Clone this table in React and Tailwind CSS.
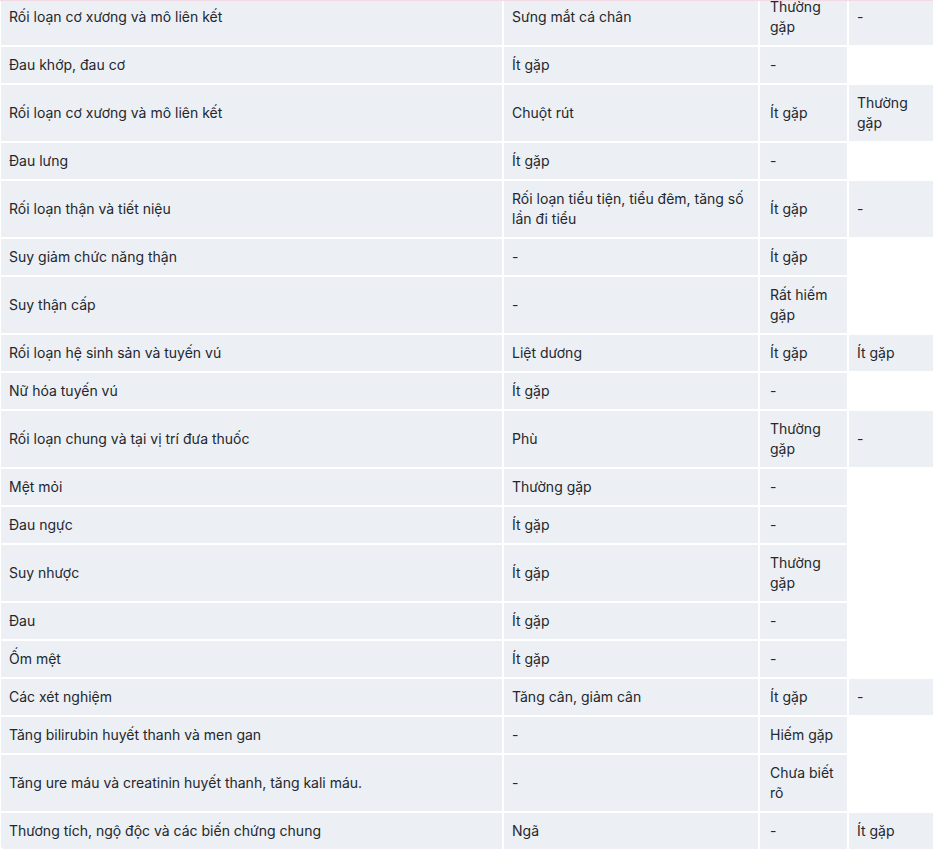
import React from 'react';

const rows = [
    ['Rối loạn cơ xương và mô liên kết', 'Sưng mắt cá chân', 'Thường gặp', '-'],
    ['Đau khớp, đau cơ', 'Ít gặp', '-'],
    ['Rối loạn cơ xương và mô liên kết', 'Chuột rút', 'Ít gặp', 'Thường gặp'],
    ['Đau lưng', 'Ít gặp', '-'],
    ['Rối loạn thận và tiết niệu', 'Rối loạn tiểu tiện, tiểu đêm, tăng số lần đi tiểu', 'Ít gặp', '-'],
    ['Suy giảm chức năng thận', '-', 'Ít gặp'],
    ['Suy thận cấp', '-', 'Rất hiếm gặp'],
    ['Rối loạn hệ sinh sản và tuyến vú', 'Liệt dương', 'Ít gặp', 'Ít gặp'],
    ['Nữ hóa tuyến vú', 'Ít gặp', '-'],
    ['Rối loạn chung và tại vị trí đưa thuốc', 'Phù', 'Thường gặp', '-'],
    ['Mệt mỏi', 'Thường gặp', '-'],
    ['Đau ngực', 'Ít gặp', '-'],
    ['Suy nhược', 'Ít gặp', 'Thường gặp'],
    ['Đau', 'Ít gặp', '-'],
    ['Ốm mệt', 'Ít gặp', '-'],
    ['Các xét nghiệm', 'Tăng cân, giảm cân', 'Ít gặp', '-'],
    ['Tăng bilirubin huyết thanh và men gan', '-', 'Hiếm gặp'],
    ['Tăng ure máu và creatinin huyết thanh, tăng kali máu.', '-', 'Chưa biết rõ'],
    ['Thương tích, ngộ độc và các biến chứng chung', 'Ngã', '-', 'Ít gặp'],
];

export default function App() {
    return (
        <div className="relative w-[933px] h-[852px] overflow-hidden bg-white font-['Inter','Noto_Sans',sans-serif] text-sm text-[#23272e]">
            <div className="absolute top-0 left-0 right-0 h-px bg-[#f2d9e3] z-10" />
            <table className="table-fixed border-separate border-spacing-[2px] -mt-[13px] -ml-px w-[939px]">
                <colgroup>
                    <col className="w-[501px]" />
                    <col className="w-[254px]" />
                    <col className="w-[87px]" />
                    <col className="w-[87px]" />
                </colgroup>
                <tbody>
                    {rows.map((cells, i) => (
                        <tr key={i}>
                            {cells.map((c, j) => (
                                <td
                                    key={j}
                                    className={`bg-[#eceff3] py-2 pr-2 leading-5 align-middle ${j === 2 ? 'pl-[10px]' : 'pl-2'} ${i === rows.length - 1 && j === 0 ? 'rounded-bl-[4px]' : ''}`}
                                >
                                    {c}
                                </td>
                            ))}
                        </tr>
                    ))}
                </tbody>
            </table>
        </div>
    );
}
